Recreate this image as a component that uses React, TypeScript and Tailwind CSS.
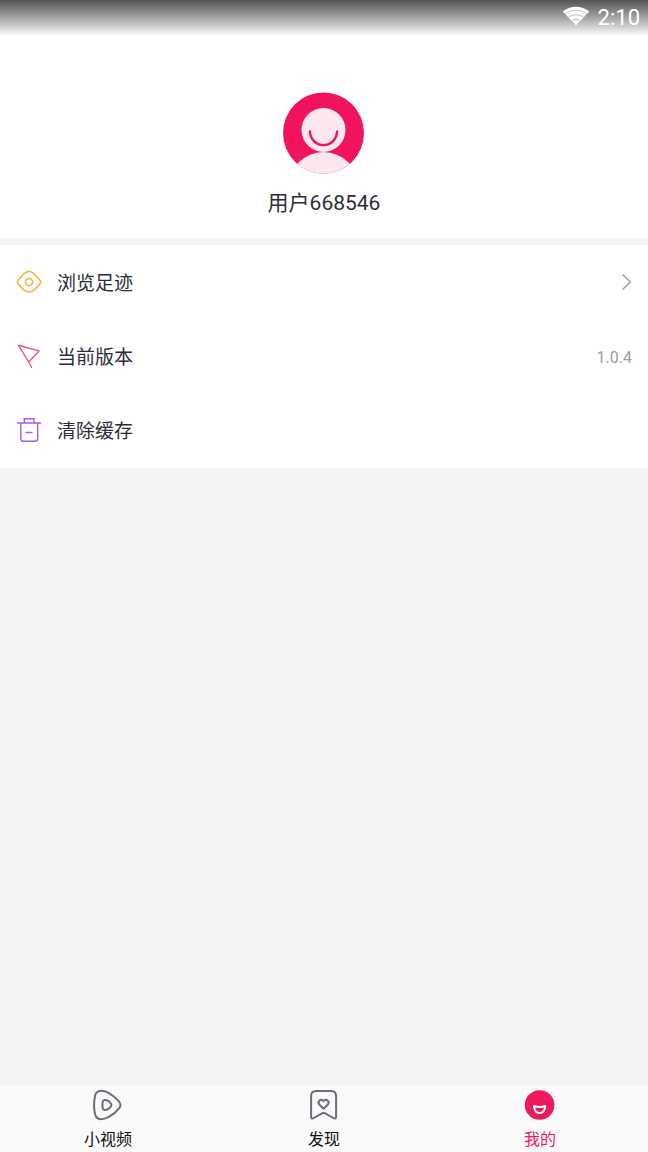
import React from "react";

type IconProps = { className?: string };

const WifiIcon = () => (
  <svg className="mb-1" width="28" height="20" viewBox="0 0 28 20" fill="none" aria-hidden="true">
    <path d="M.8 5.5C8.4-.9 19.6-.9 27.2 5.5L14 19.5Z" fill="#fff" />
    <path
      d="M3 8.2C9.6 3 18.4 3 25 8.2M6.2 11.6C11 7.8 17 7.8 21.800 11.600M9.500 15C12.300 12.900 15.700 12.900 18.500 15"
      stroke="#a8a8a8"
      strokeWidth=".8"
    />
  </svg>
);

const Avatar = () => (
  <svg width="82" height="82" viewBox="0 0 82 82" fill="none" aria-hidden="true">
    <defs>
      <clipPath id="avatar-circle">
        <circle cx="40.5" cy="41" r="40.5" />
      </clipPath>
    </defs>
    <g clipPath="url(#avatar-circle)">
      <rect width="82" height="82" fill="#f1145c" />
      <circle cx="40.5" cy="95" r="35" fill="#fde7ef" />
      <circle cx="40.5" cy="38" r="22" fill="#fde7ef" />
    </g>
    <path
      d="M27 39.5a13.5 13.5 0 0 0 27 0"
      stroke="#f1145c"
      strokeWidth="2.4"
      strokeLinecap="round"
    />
  </svg>
);

const EyeIcon = () => (
  <svg width="26" height="26" viewBox="0 0 26 26" fill="none" stroke="#f0b23c" strokeWidth="1.5" aria-hidden="true">
    <path d="M1.900 14.300Q.9 13 1.900 11.700C4.500 8 7 5 9.800 3.300Q13 1.600 16.200 3.300C19 5 21.500 8 24.100 11.700Q25.100 13 24.100 14.300C21.500 18 19 21 16.200 22.300Q13 23.800 9.800 22.300C7 21 4.500 18 1.900 14.300Z" />
    <circle cx="13" cy="13" r="3.6" />
  </svg>
);

const PlaneIcon = () => (
  <svg width="26" height="26" viewBox="0 0 26 26" fill="none" stroke="#ee4f8c" strokeWidth="1.4" strokeLinejoin="round" strokeLinecap="round" aria-hidden="true">
    <path d="M2.5 2.3L23 7.900L12.700 19ZM12.700 19L15.600 24.500" />
  </svg>
);

const TrashIcon = () => (
  <svg width="26" height="26" viewBox="0 0 26 26" fill="none" stroke="#a95be6" strokeWidth="1.4" strokeLinecap="round" aria-hidden="true">
    <path d="M1.500 6H24.500M8.300 6V1.800H18V6M4.800 6V21.500Q4.800 24.300 7.600 24.300H18.900Q21.700 24.300 21.700 21.500V6M10 15.500H16" />
  </svg>
);

const ChevronIcon = () => (
  <svg width="10" height="18" viewBox="0 0 10 18" fill="none" stroke="#9a9da3" strokeWidth="1.5" aria-hidden="true">
    <path d="M.6 1.500L8.300 9L.6 16.500" />
  </svg>
);

const VideoIcon = ({ className }: IconProps) => (
  <svg className={className} viewBox="0 0 32 32" fill="none" stroke="#6b6e78" strokeWidth="2" strokeLinejoin="round" aria-hidden="true">
    <path d="M6.500 2.200C12 .3 21.500 5.500 27.500 13.200Q29.400 16 27.500 18.800C21.500 26.500 12 31.700 6.500 29.800Q3.800 28.700 3.100 25.500C1.800 19.500 1.800 12.500 3.100 6.500Q3.800 3.300 6.500 2.200Z" />
    <path d="M12.300 11C14.500 10.600 17.300 12.200 18.900 14.500Q19.900 16 18.900 17.500C17.300 19.800 14.500 21.400 12.300 21Q11 20.600 10.700 19.300Q10.100 16 10.700 12.700Q11 11.400 12.300 11Z" />
  </svg>
);

const DiscoverIcon = ({ className }: IconProps) => (
  <svg className={className} viewBox="0 0 32 32" fill="none" stroke="#6b6e78" strokeWidth="2" strokeLinejoin="round" aria-hidden="true">
    <path d="M3.100 27.500V7Q3.100 2 8.100 2H23.100Q28.100 2 28.100 7V27.500Q28.100 30.500 25.400 29L16.800 24.200Q15.600 23.600 14.400 24.200L5.800 29Q3.100 30.500 3.100 27.500Z" />
    <path d="M15.600 19.700L11.300 15.500C9 12.300 13 9 15.600 12C18.200 9 22.200 12.300 19.900 15.500Z" />
  </svg>
);

const MineIcon = ({ className }: IconProps) => (
  <svg className={className} viewBox="0 0 32 32" fill="none" aria-hidden="true">
    <circle cx="15.600" cy="16" r="14.800" fill="#ee1a5e" />
    <path d="M10 17Q15.600 19 21.200 17Q20.700 24 15.600 24Q10.500 24 10 17Z" stroke="#fff" strokeWidth="2" strokeLinejoin="round" />
  </svg>
);

const menuItems = [
  { label: "浏览足迹", icon: <EyeIcon />, extra: null, arrow: true },
  { label: "当前版本", icon: <PlaneIcon />, extra: "1.0.4", arrow: false },
  { label: "清除缓存", icon: <TrashIcon />, extra: null, arrow: false },
];

const tabs = [
  { label: "小视频", Icon: VideoIcon, active: false },
  { label: "发现", Icon: DiscoverIcon, active: false },
  { label: "我的", Icon: MineIcon, active: true },
];

const App = () => {
  return (
    <div className="flex min-h-screen flex-col bg-[#f3f4f6] font-[Roboto,'Noto_Sans_CJK_SC',sans-serif]">
      {/* Profile */}
      <header className="bg-white pb-[19px]">
        <div className="flex h-9 items-center justify-end gap-2 bg-linear-to-b from-[#555555] to-white px-2 text-[22px] leading-9 text-white">
          <WifiIcon />
          <span>2:10</span>
        </div>
        <div className="flex flex-col items-center gap-[13px] pt-14">
          <Avatar />
          <h1 className="text-[21px] leading-8 text-[#2b2e38]">用户668546</h1>
        </div>
      </header>

      {/* Menu */}
      <main className="grow pt-[7px]">
        <ul className="flex flex-col bg-white pb-px">
          {menuItems.map((item) => (
            <li key={item.label}>
              <button
                type="button"
                className="flex h-[74px] w-full items-center gap-[15px] px-4 text-left text-[19px] text-[#2b2e38]"
              >
                {item.icon}
                <span className="grow pt-1">{item.label}</span>
                {item.extra && <span className="pt-1 text-base text-[#9a9da3]">{item.extra}</span>}
                {item.arrow && <ChevronIcon />}
              </button>
            </li>
          ))}
        </ul>
      </main>

      {/* Bottom tabs */}
      <nav className="grid grid-cols-3 bg-[#fafafb]">
        {tabs.map(({ label, Icon, active }) => (
          <button
            key={label}
            type="button"
            aria-current={active ? "page" : undefined}
            className={`flex h-[67px] flex-col items-center gap-[7px] pt-1 text-base ${
              active ? "text-[#ee1a5e]" : "text-[#111111]"
            }`}
          >
            <Icon className="size-8" />
            <span>{label}</span>
          </button>
        ))}
      </nav>
    </div>
  );
};

export default App;
